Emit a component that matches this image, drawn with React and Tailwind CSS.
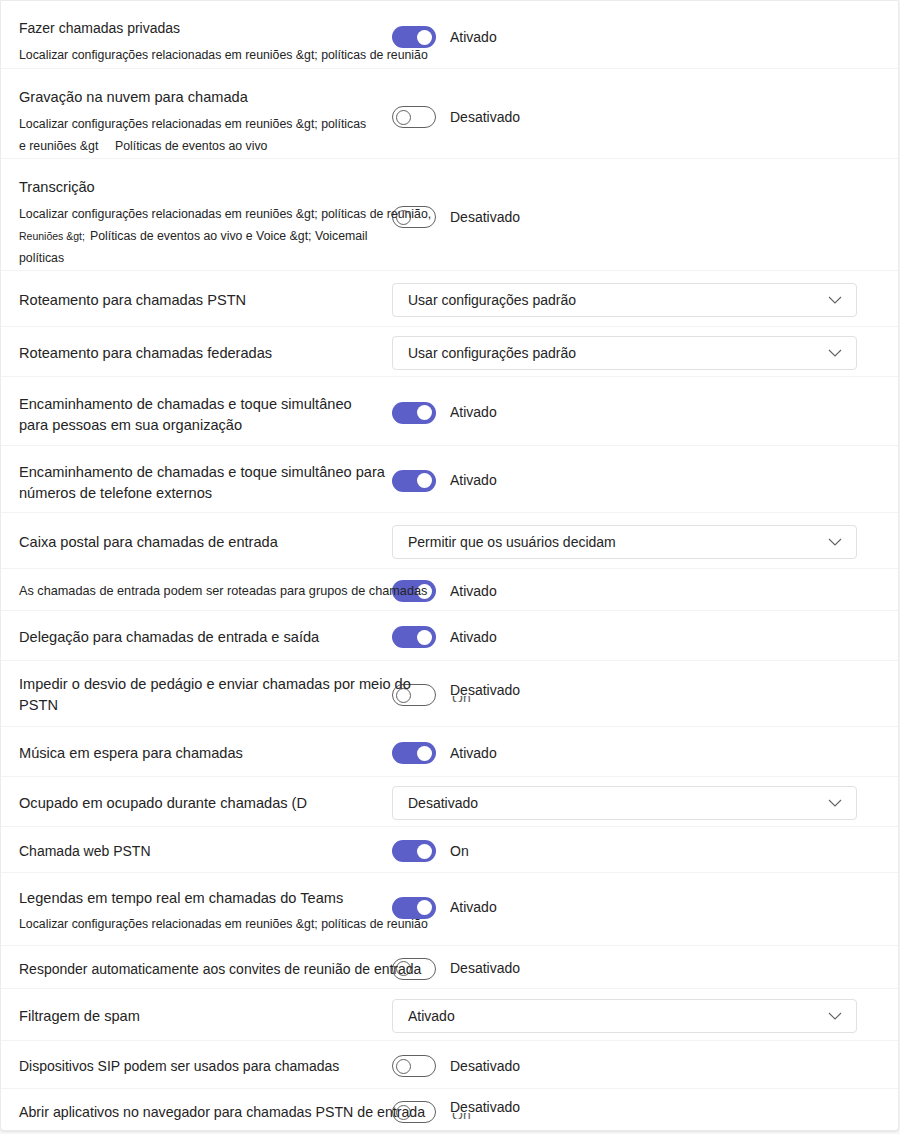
import React from 'react';

// Teams admin center – calling policy settings list
const ROWS = [
  { kind: 'toggle', on: true, label: 'Ativado', h: 'h-[68px] pt-[5px]', lp: 'pt-[10px]', size: 'text-[14px]', title: 'Fazer chamadas privadas',
    sub: [<span key="a">Localizar configurações relacionadas em reuniões &amp;gt; políticas de reunião</span>] },
  { kind: 'toggle', on: false, label: 'Desativado', h: 'h-[90px] pt-[7px]', lp: 'pt-[10px]', title: 'Gravação na nuvem para chamada',
    sub: [
      <span key="a">Localizar configurações relacionadas em reuniões &amp;gt; políticas</span>,
      <span key="b" className="flex">
        <span className="w-[96px]">e reuniões &amp;gt</span>
        <span>Políticas de eventos ao vivo</span>
      </span>,
    ] },
  { kind: 'toggle', on: false, label: 'Desativado', h: 'h-[112px] pt-[5px]', lp: 'pt-[12px]', title: 'Transcrição',
    sub: [
      <span key="a">Localizar configurações relacionadas em reuniões &amp;gt; políticas de reunião,</span>,
      <span key="b" className="flex items-baseline">
        <span className="w-[71px] text-[10.5px]">Reuniões &amp;gt;</span>
        <span>Políticas de eventos ao vivo e Voice &amp;gt; Voicemail</span>
      </span>,
      <span key="c">políticas</span>,
    ] },
  { kind: 'select', value: 'Usar configurações padrão', h: 'h-[56px] pt-[3px]', title: 'Roteamento para chamadas PSTN' },
  { kind: 'select', value: 'Usar configurações padrão', h: 'h-[50px] pt-[3px]', title: 'Roteamento para chamadas federadas' },
  { kind: 'toggle', on: true, label: 'Ativado', h: 'h-[69px] pt-[3px]', lp: 'pt-[5px]',
    lines: ['Encaminhamento de chamadas e toque simultâneo', 'para pessoas em sua organização'] },
  { kind: 'toggle', on: true, label: 'Ativado', h: 'h-[67px] pt-[3px]', lp: 'pt-[5px]',
    lines: ['Encaminhamento de chamadas e toque simultâneo para', 'números de telefone externos'] },
  { kind: 'select', value: 'Permitir que os usuários decidam', h: 'h-[56px] pt-[3px]', title: 'Caixa postal para chamadas de entrada' },
  { kind: 'toggle', on: true, label: 'Ativado', h: 'h-[42px] pt-[3px]', size: 'text-[12.7px]', title: 'As chamadas de entrada podem ser roteadas para grupos de chamadas' },
  { kind: 'toggle', on: true, label: 'Ativado', h: 'h-[50px] pt-[3px]', title: 'Delegação para chamadas de entrada e saída' },
  { kind: 'toggle', on: false, label: 'Desativado', ghost: true, h: 'h-[66px] pt-[3px]',
    lines: ['Impedir o desvio de pedágio e enviar chamadas por meio do', 'PSTN'] },
  { kind: 'toggle', on: true, label: 'Ativado', h: 'h-[50px] pt-[3px]', title: 'Música em espera para chamadas' },
  { kind: 'select', value: 'Desativado', h: 'h-[50px] pt-[3px]', title: 'Ocupado em ocupado durante chamadas (D' },
  { kind: 'toggle', on: true, label: 'On', h: 'h-[46px] pt-[3px]', size: 'text-[14px]', title: 'Chamada web PSTN' },
  { kind: 'toggle', on: true, label: 'Ativado', h: 'h-[73px] pb-[3px]', lp: 'pt-[8px]', sm: 'mt-[5px]', title: 'Legendas em tempo real em chamadas do Teams',
    sub: [<span key="a">Localizar configurações relacionadas em reuniões &amp;gt; políticas de reunião</span>] },
  { kind: 'toggle', on: false, label: 'Desativado', h: 'h-[43px] pt-[3px]', size: 'text-[14px]', title: 'Responder automaticamente aos convites de reunião de entrada' },
  { kind: 'select', value: 'Ativado', h: 'h-[52px] pt-[3px]', title: 'Filtragem de spam' },
  { kind: 'toggle', on: false, label: 'Desativado', h: 'h-[48px] pt-[3px]', size: 'text-[14px]', title: 'Dispositivos SIP podem ser usados para chamadas' },
  { kind: 'toggle', on: false, label: 'Desativado', ghost: true, h: 'h-[43px] pt-[3px]', size: 'text-[14.2px]', title: 'Abrir aplicativos no navegador para chamadas PSTN de entrada', last: true },
];

function Toggle({ on }) {
  if (on) {
    return (
      <div className="relative w-[44px] h-[22px] rounded-full bg-[#5b5fc7] shrink-0">
        <div className="absolute right-[4px] top-[3.5px] w-[15px] h-[15px] rounded-full bg-white" />
      </div>
    );
  }
  return (
    <div className="relative w-[44px] h-[22px] rounded-full border border-[#616161] bg-white shrink-0">
      <div className="absolute left-[3px] top-[2.5px] w-[15px] h-[15px] rounded-full border border-[#616161]" />
    </div>
  );
}

function Chevron() {
  return (
    <svg width="14" height="8" viewBox="0 0 14 8" fill="none">
      <polyline points="1,1 7,7 13,1" stroke="#616161" strokeWidth="1.1" />
    </svg>
  );
}

function Row({ row }) {
  const size = row.size || 'text-[14.6px]';
  return (
    <div className={`flex items-center pl-[18px] ${row.h} ${row.last ? '' : 'border-b border-[#f3f3f3]'}`}>
      {/* left: title + description, may spill under the control */}
      <div className={`relative z-10 w-[373px] shrink-0 whitespace-nowrap text-[#242424] ${row.lp || ''}`}>
        {row.title && <div className={`${size} leading-[20px]`}>{row.title}</div>}
        {row.lines && row.lines.map(l => (
          <div key={l} className="text-[14.6px] leading-[21px]">{l}</div>
        ))}
        {row.sub && (
          <div className={`${row.sm || 'mt-[6px]'} text-[12.3px] leading-[22px]`}>
            {row.sub.map((s, i) => <div key={i}>{s}</div>)}
          </div>
        )}
      </div>

      {/* right: control */}
      {row.kind === 'toggle' ? (
        <div className="flex items-center gap-[14px]">
          <Toggle on={row.on} />
          <div className="relative text-[14px] text-[#242424]">
            {row.ghost && (
              <div className="absolute left-[2px] top-[11px] h-[6px] overflow-hidden text-[#616161] leading-none">
                <div className="-mt-[5px] text-[14px]">On</div>
              </div>
            )}
            <span className={`relative ${row.ghost ? '-top-[5px]' : ''}`}>{row.label}</span>
          </div>
        </div>
      ) : (
        <div className="flex items-center justify-between w-[465px] h-[34px] pl-[15px] pr-[14px] border border-[#e1e1e1] rounded-[4px] text-[14px] text-[#242424]">
          <span>{row.value}</span>
          <Chevron />
        </div>
      )}
    </div>
  );
}

export default function App() {
  return (
    <div className="w-[900px] h-[1134px] bg-[#f7f7f7] font-['Liberation_Sans',Arial,sans-serif]">
      <div className="w-[899px] h-[1131px] bg-white border border-[#ebebeb] rounded-b-[4px] shadow-[0_1px_2px_rgba(0,0,0,0.08)]">
        {ROWS.map((r, i) => <Row key={i} row={r} />)}
      </div>
    </div>
  );
}
